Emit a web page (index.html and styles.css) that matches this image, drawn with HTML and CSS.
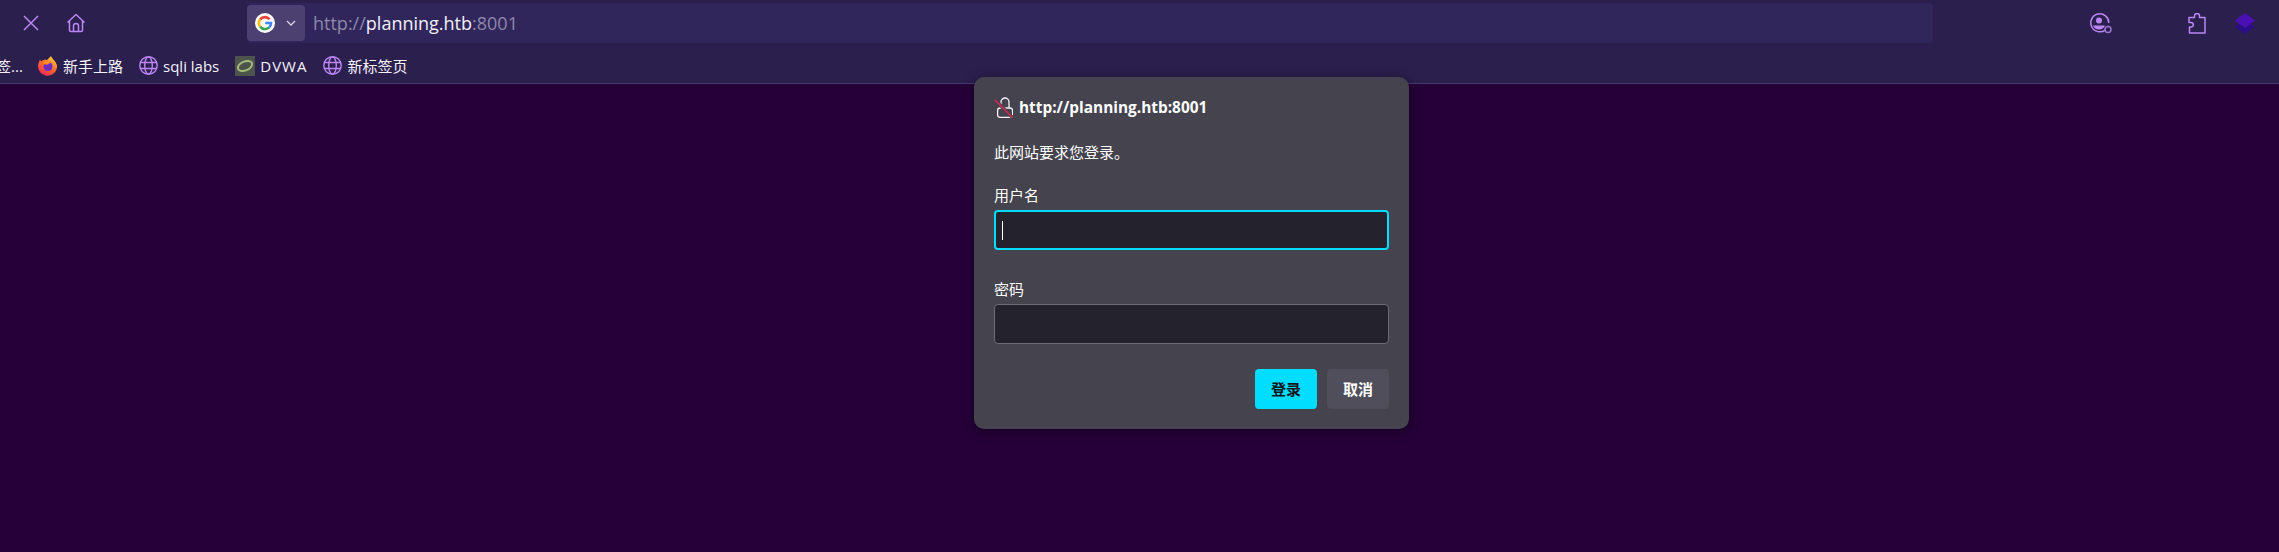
FILE: index.html
```html
<!DOCTYPE html>
<html lang="zh-CN">
<head>
  <meta charset="UTF-8">
  <title>planning.htb</title>
  <link rel="stylesheet" href="styles.css">
</head>
<body>
  <header class="browser-top">
    <div class="toolbar">
      <div class="nav-btns">
        <svg class="icon-close" width="20" height="20" viewBox="0 0 20 20"><path d="M3 3l14 14M17 3L3 17" stroke="#bb86f4" stroke-width="1.5" fill="none"/></svg>
        <svg class="icon-home" width="20" height="20" viewBox="0 0 20 20"><path d="M1.5 9.5L10 1.5l8.5 8M3.5 8v9.2c0 .8.5 1.300 1.300 1.300h10.400c.8 0 1.300-.5 1.300-1.300V8M7.500 18.500v-5.500a2.500 2.500 0 0 1 5 0v5.500" stroke="#bb86f4" stroke-width="1.500" fill="none" stroke-linejoin="round"/></svg>
      </div>
      <div class="url-bar">
        <div class="engine-chip">
          <svg width="20" height="20" viewBox="0 0 20 20">
            <circle cx="10" cy="10" r="10" fill="#fff"/>
            <path d="M14.600 6.300A6 6 0 0 0 5.200 6.400" stroke="#ea4335" stroke-width="2.600" fill="none"/>
            <path d="M5.200 6.400a6 6 0 0 0 0 7.200" stroke="#fbbc05" stroke-width="2.600" fill="none"/>
            <path d="M5.200 13.600a6 6 0 0 0 8.900 .8" stroke="#34a853" stroke-width="2.600" fill="none"/>
            <path d="M14.100 14.400A6 6 0 0 0 16 10H10.200" stroke="#4285f4" stroke-width="2.600" fill="none"/>
          </svg>
          <svg width="10" height="6" viewBox="0 0 10 6"><path d="M1 1l4 4 4-4" stroke="#d8d4e6" stroke-width="1.300" fill="none"/></svg>
        </div>
        <span class="url-text"><span class="url-dim">http://</span>planning.htb<span class="url-dim">:8001</span></span>
      </div>
      <div class="tool-icons">
        <svg class="icon-account" width="24" height="21" viewBox="0 0 24 21">
          <path d="M16.500 16.800A9 9 0 1 1 19.800 10" stroke="#bb86f4" stroke-width="1.500" fill="none"/>
          <circle cx="10" cy="7.500" r="3" fill="#bb86f4"/>
          <path d="M4 12.500h12a6.500 6.500 0 0 1-12 0z" fill="#bb86f4"/>
          <circle cx="19" cy="16.500" r="3" stroke="#9b74cf" stroke-width="1.500" fill="none"/>
        </svg>
        <svg class="icon-puzzle" width="18" height="21" viewBox="0 0 18 21"><path d="M6.500 4.500V3a2.500 2.500 0 0 1 5 0v1.500h5.500v15.500H1.500v-6h1.500a2.300 2.300 0 0 0 0-4.600H1v-5z" stroke="#bb86f4" stroke-width="1.500" fill="none" stroke-linejoin="round"/></svg>
        <svg class="icon-layers" width="20" height="21" viewBox="0 0 20 21">
          <path d="M10 6l10 8-10 7-10-7z" fill="#2c0f86"/>
          <path d="M10 0l10 7.500-10 7.500L0 7.500z" fill="#4a10b4"/>
        </svg>
      </div>
    </div>
    <nav class="bookmarks">
      <span class="bm-cut">签...</span>
      <span class="bm">
        <svg width="20" height="20" viewBox="0 0 20 20">
          <defs>
            <linearGradient id="fox" x1="0.800" y1="0" x2="0.200" y2="1"><stop offset="0" stop-color="#ffd23a"/><stop offset="0.500" stop-color="#ff6a2a"/><stop offset="1" stop-color="#f0245c"/></linearGradient>
          </defs>
          <path d="M13 0c1 3 5 5 6 9.500A9.500 9.500 0 1 1 1 6c.3-1 .8-2 1.300-2.500 0 1 .5 1.700 1 2C5 3.500 7 3.500 9 4c1-1.500 3-2.500 4-4z" fill="url(#fox)"/>
          <circle cx="10" cy="10.500" r="4.500" fill="#6a2fc0"/>
          <path d="M5 8c2-3 7-3.500 10-1-2-.5-4 0-5 1.500-2 0-3.500 0-5-.5z" fill="#ff8a2a"/>
        </svg>
        新手上路
      </span>
      <span class="bm">
        <svg class="globe" width="19" height="19" viewBox="0 0 19 19"><use href="#globe-shape"/></svg>
        sqli labs
      </span>
      <span class="bm bm-dvwa">
        <svg width="20" height="20" viewBox="0 0 20 20">
          <rect width="20" height="20" fill="#4d544c"/>
          <ellipse cx="10" cy="10" rx="7.500" ry="4.500" transform="rotate(-22 10 10)" stroke="#a3b87a" stroke-width="2" fill="none"/>
        </svg>
        DVWA
      </span>
      <span class="bm">
        <svg class="globe" width="19" height="19" viewBox="0 0 19 19">
          <g id="globe-shape" stroke="#bb86f4" stroke-width="1.400" fill="none">
            <circle cx="9.500" cy="9.500" r="8.700"/>
            <ellipse cx="9.500" cy="9.500" rx="3.800" ry="8.700"/>
            <path d="M1.500 6.500h16M1.500 12.500h16"/>
          </g>
        </svg>
        新标签页
      </span>
    </nav>
  </header>

  <div class="auth-dialog">
    <div class="auth-title">
      <svg width="19" height="21" viewBox="0 0 19 21">
        <path d="M7 11V5a4 4 0 0 1 8 0v6" stroke="#f4f3f6" stroke-width="1.300" fill="none"/>
        <rect x="3.600" y="11" width="15" height="9.300" rx="2.500" stroke="#f4f3f6" stroke-width="1.300" fill="none"/>
        <path d="M1 3l17.500 17.500" stroke="#45434e" stroke-width="3.400"/>
        <path d="M1 3l17.500 17.500" stroke="#e2264f" stroke-width="1.500"/>
      </svg>
      <span>http://planning.htb:8001</span>
    </div>
    <p class="auth-desc">此网站要求您登录。</p>
    <div class="field">
      <label>用户名</label>
      <div class="input-box focused"><i class="caret"></i></div>
    </div>
    <div class="field">
      <label>密码</label>
      <div class="input-box"></div>
    </div>
    <div class="auth-actions">
      <button class="btn btn-primary">登录</button>
      <button class="btn">取消</button>
    </div>
  </div>
</body>
</html>
```

FILE: styles.css
```css
/* Page */
html, body {
  height: 100%;
}

body {
  margin: 0;
  background: #250039;
  color: #fff;
  font-family: "Open Sans", "Noto Sans CJK SC", sans-serif;
  overflow: hidden;
}

/* Browser chrome */
.browser-top {
  height: 83px;
  background: #2b1f4e;
  border-bottom: 1px solid #463b70;
}

.toolbar {
  display: flex;
  align-items: center;
  height: 46px;
}

.nav-btns {
  display: flex;
  align-items: center;
  gap: 25px;
  width: 231px;
  padding-left: 21px;
  box-sizing: border-box;
}

.url-bar {
  display: flex;
  align-items: center;
  width: 1686px;
  height: 40px;
  margin-left: 16px;
  background: #30265c;
  border-radius: 4px;
}

.engine-chip {
  display: flex;
  align-items: center;
  gap: 11px;
  box-sizing: border-box;
  width: 58px;
  height: 36px;
  padding-left: 8px;
  background: #4b4070;
  border-radius: 4px;
}

.url-text {
  margin-left: 8px;
  font-size: 18px;
  color: #f2f0f8;
}

.url-dim {
  color: #8e88ab;
}

.tool-icons {
  display: flex;
  align-items: center;
  margin-left: 156px;
}

.icon-puzzle {
  margin-left: 75px;
}

.icon-layers {
  margin-left: 29px;
}

.bookmarks {
  display: flex;
  align-items: center;
  height: 35px;
  margin-top: 2px;
  font-size: 15px;
  color: #f4f2fa;
  white-space: nowrap;
}

.bm-cut {
  flex: none;
  width: 42px;
  margin-left: -4px;
}

.bm {
  display: flex;
  align-items: center;
  gap: 5px;
  margin-right: 16px;
}

.bm-dvwa {
  letter-spacing: 1px;
}

/* Auth dialog */
.auth-dialog {
  position: absolute;
  left: 974px;
  top: 77px;
  width: 435px;
  height: 352px;
  box-sizing: border-box;
  padding: 20px;
  background: #45434e;
  border-radius: 10px;
  box-shadow: 0 2px 12px rgba(0, 0, 0, 0.45);
  font-size: 15px;
}

.auth-title {
  display: flex;
  align-items: center;
  gap: 6px;
  height: 21px;
  font-size: 15.4px;
  font-weight: 700;
}

.auth-desc {
  margin: 24px 0 0;
  line-height: 20px;
}

.field {
  margin-top: 23px;
}

.field + .field {
  margin-top: 29px;
}

.field label {
  display: block;
  height: 20px;
  line-height: 20px;
  margin-bottom: 5px;
}

.input-box {
  position: relative;
  height: 40px;
  box-sizing: border-box;
  background: #24222d;
  border: 1px solid #6d6b76;
  border-radius: 4px;
}

.input-box.focused {
  border: 2px solid #00ddff;
}

.caret {
  position: absolute;
  left: 6px;
  top: 9px;
  width: 1px;
  height: 19px;
  background: #fff;
}

.auth-actions {
  display: flex;
  justify-content: flex-end;
  gap: 10px;
  margin-top: 25px;
}

.btn {
  width: 62px;
  height: 40px;
  padding: 0 0 2px;
  border: none;
  border-radius: 4px;
  background: #504e5a;
  color: #fff;
  font-family: inherit;
  font-size: 15px;
  font-weight: 700;
}

.btn-primary {
  background: #00ddff;
  color: #15141a;
}
```
